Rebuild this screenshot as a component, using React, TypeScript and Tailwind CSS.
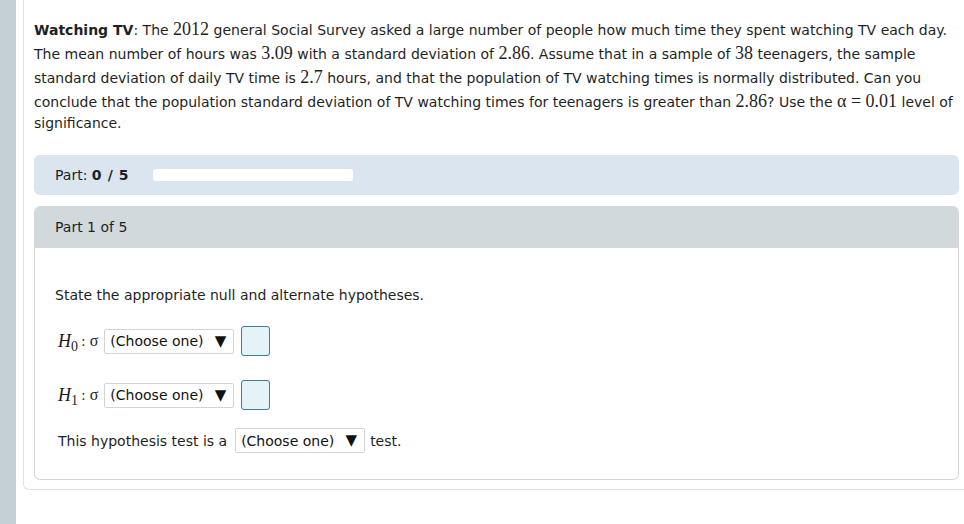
import React from "react";

const sans = "font-['Verdana','DejaVu_Sans',sans-serif]";
const serif = "font-['Liberation_Serif','Times_New_Roman',serif]";

function Num({ children }: { children: React.ReactNode }) {
  return <span className={`${serif} text-[18px] leading-none`}>{children}</span>;
}

function ChooseOne({ className = "" }: { className?: string }) {
  return (
    <span
      className={`inline-flex items-center justify-between h-[25px] w-[130px] border border-[#d4d4d4] rounded-[2px] bg-white pl-[5px] pr-[7px] text-[14px] leading-none text-[#111] ${className}`}
    >
      <span>(Choose one)</span>
      <span className="text-[15px]">▼</span>
    </span>
  );
}

function AnswerBox() {
  return <span className="inline-block w-[29px] h-[30px] rounded-[3px] border border-[#3f8088] bg-[#e4f3f8]" />;
}

function Hyp({ sub }: { sub: string }) {
  return (
    <div className="flex items-center h-[30px] pl-[3px] leading-none">
      <span className={`${serif} italic text-[18px] text-[#1a1a1a]`}>H</span>
      <span className={`${serif} text-[14px] relative top-[6px] mr-[3px]`}>{sub}</span>
      <span className="text-[14px] mr-[4px]">:</span>
      <span className={`${serif} text-[16px] mr-[6px]`}>σ</span>
      <ChooseOne />
      <span className="w-[7px]" />
      <AnswerBox />
    </div>
  );
}

export default function App() {
  return (
    <div className={`w-[964px] h-[524px] overflow-hidden bg-white flex ${sans} text-[14px] text-[#1f1f1f]`}>
      {/* sidebar */}
      <div className="w-[16px] h-full bg-[#c4d0d6] flex-shrink-0" />

      {/* outer panel */}
      <div className="ml-[7px] w-[960px] h-[490px] flex-shrink-0 border-l border-b border-[#e2e2e2] rounded-bl-[6px] pl-[10px]">
        {/* question */}
        <div className="pt-[18px] leading-[24px] whitespace-nowrap">
          <div className="h-[24px]">
            <b>Watching TV</b>: The <Num>2012</Num> general Social Survey asked a large number of people how much time they spent watching TV each day.
          </div>
          <div className="h-[24px]">
            The mean number of hours was <Num>3.09</Num> with a standard deviation of <Num>2.86</Num>. Assume that in a sample of <Num>38</Num> teenagers, the sample
          </div>
          <div className="h-[24px]">
            standard deviation of daily TV time is <Num>2.7</Num> hours, and that the population of TV watching times is normally distributed. Can you
          </div>
          <div className="h-[24px]">
            conclude that the population standard deviation of TV watching times for teenagers is greater than <Num>2.86</Num>? Use the{" "}
            <span className={serif + " text-[18px] leading-none"}>α = 0.01</span> level of
          </div>
          <div className="leading-[18px]">significance.</div>
        </div>

        {/* progress */}
        <div className="mt-[23px] w-[925px] h-[40px] rounded-[6px] bg-[#dae5ef] flex items-center pl-[21px]">
          <span>
            Part: <b className="tracking-[0.6px]">0 / 5</b>
          </span>
          <div className="ml-[24px] w-[200px] h-[12px] rounded-[3px] bg-white" />
        </div>

        {/* part card */}
        <div className="mt-[11px] w-[925px] h-[274px] rounded-[6px] border border-[#d6d6d6] border-t-0 overflow-hidden">
          <div className="h-[42px] bg-[#d1d9dd] flex items-center pl-[20px]">Part 1 of 5</div>
          <div className="pl-[20px] pt-[39px]">
            <div className="leading-[16px]">State the appropriate null and alternate hypotheses.</div>
            <div className="mt-[23px]">
              <Hyp sub="0" />
            </div>
            <div className="mt-[24px]">
              <Hyp sub="1" />
            </div>
            <div className="mt-[18px] flex items-center pl-[3px] leading-none">
              <span>This hypothesis test is a</span>
              <ChooseOne className="ml-[8px] mr-[5px]" />
              <span>test.</span>
            </div>
          </div>
        </div>
      </div>
    </div>
  );
}
